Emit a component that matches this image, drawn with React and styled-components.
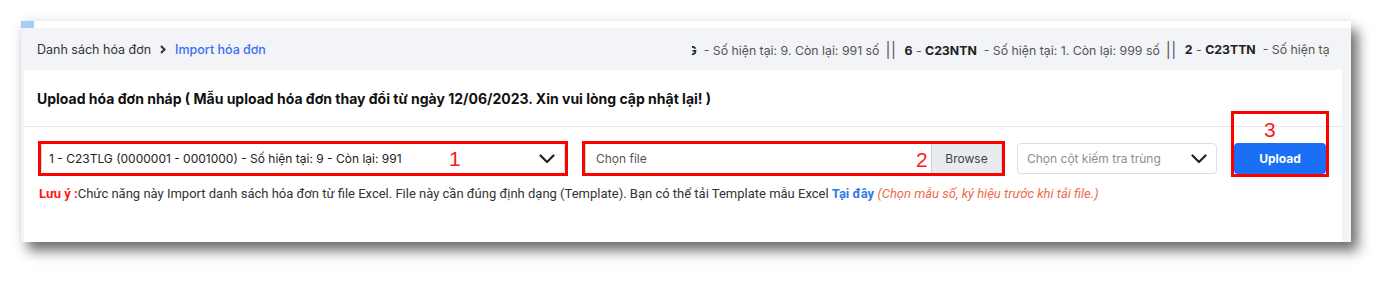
import styled, { createGlobalStyle } from 'styled-components'

const GlobalStyle = createGlobalStyle`
    body {
        margin: 0;
        background: #ffffff;
        font-family: Inter, "Noto Sans", sans-serif;
    }
`;

const Page = styled.div`
    padding: 21px 0 0 21px;
    height: 285px;
    box-sizing: border-box;
`;

const Frame = styled.div`
    width: 1330px;
    height: 221px;
    background: #f2f4f7;
    display: flex;
    flex-direction: column;
    box-shadow: 7px 9px 12px rgba(0, 0, 0, 0.55), 0 0 10px rgba(0, 0, 0, 0.08);
`;

const TopStrip = styled.div`
    height: 7px;
    background: #ffffff;
    display: flex;
`;

const TabMark = styled.div`
    width: 13px;
    background: #a6cdf6;
`;

const Header = styled.div`
    height: 42px;
    display: flex;
    align-items: center;
    padding: 0 0 0 16px;
`;

const Crumbs = styled.div`
    display: flex;
    align-items: center;
    font-size: 12.5px;
    color: #333;
    width: 655px;
`;

const CrumbLink = styled.span`
    color: ${p => (p.$active ? '#3b6ff5' : '#333')};
    font-weight: ${p => (p.$active ? 500 : 400)};
`;

const Chevron = styled.svg`
    margin: 0 9px 0 9px;
`;

const Marquee = styled.div`
    width: 637px;
    overflow: hidden;
    white-space: nowrap;
    font-size: 12.3px;
    color: #555;
`;

const MarqueeTrack = styled.div`
    display: inline-flex;
    align-items: center;
    transform: translateX(-${p => p.$offset}px);
`;

const Code = styled.b`
    color: #222;
    font-weight: 700;
`;

const Sep = styled.span`
    font-size: 15px;
    font-weight: 400;
    color: #555;
    margin: 0 8px 0 6px;
    letter-spacing: 0.5px;
`;

const Content = styled.div`
    flex: 1;
    padding: 0 9px 0 3px;
    display: flex;
`;

const Card = styled.div`
    flex: 1;
    background: #ffffff;
    display: flex;
    flex-direction: column;
`;

const CardTitle = styled.div`
    height: 56px;
    display: flex;
    align-items: center;
    padding: 0 13px;
    font-size: 14px;
    font-weight: 700;
    color: #111;
    border-bottom: 1px solid #e6e8ec;
`;

const CardBody = styled.div`
    padding: 16px 13px 0 17px;
`;

const Row = styled.div`
    display: flex;
    align-items: center;
    height: 31px;
`;

const Mark = styled.div`
    position: relative;
    margin-left: ${p => p.$before || 0}px;
    margin-right: ${p => p.$gap || 0}px;
    &::after {
        content: '';
        position: absolute;
        top: ${p => p.$top || -2}px;
        bottom: ${p => p.$bottom || -2}px;
        left: -3px;
        right: -3px;
        border: 3px solid #ff0000;
        pointer-events: none;
    }
`;

const MarkNum = styled.span`
    position: absolute;
    left: ${p => p.$left}px;
    top: ${p => p.$top}px;
    font-family: "Liberation Sans", sans-serif;
    font-size: 21px;
    color: #ff1a1a;
`;

const SelectBox = styled.div`
    width: ${p => p.$width}px;
    height: 31px;
    box-sizing: border-box;
    border: 1px solid ${p => (p.$plain ? '#dcdfe4' : '#cfd4da')};
    border-radius: 4px;
    display: flex;
    align-items: center;
    justify-content: space-between;
    padding: 0 9px 0 ${p => p.$padLeft || 9}px;
    font-size: 12px;
    color: ${p => (p.$placeholder ? '#8a8f96' : '#222')};
    background: #ffffff;
`;

const FileInput = styled.div`
    width: 417px;
    height: 31px;
    box-sizing: border-box;
    border: 1px solid #cfd4da;
    display: flex;
    font-size: 12px;
    color: #555;
`;

const FileName = styled.div`
    flex: 1;
    display: flex;
    align-items: center;
    padding-left: 10px;
`;

const Browse = styled.div`
    width: 69px;
    display: flex;
    align-items: center;
    justify-content: center;
    background: #e9ecef;
    border-left: 1px solid #cfd4da;
    color: #444;
`;

const UploadButton = styled.button`
    width: 92px;
    height: 31px;
    border: none;
    border-radius: 4px;
    background: #1a6ff4;
    color: #ffffff;
    font-family: Inter, sans-serif;
    font-weight: 700;
    font-size: 12px;
`;

const Note = styled.div`
    margin-top: 12px;
    margin-left: -2px;
    font-family: Roboto, sans-serif;
    font-size: 13px;
    color: #333;
    white-space: nowrap;
`;

const NoteLabel = styled.b`
    color: #ff1a1a;
`;

const NoteLink = styled.b`
    color: #2f7be8;
`;

const NoteHint = styled.i`
    color: #ee6a4a;
`;

const Caret = () => (
    <svg width="16" height="10" viewBox="0 0 16 10">
        <path d="M1.5 1.5 L8 8 L14.5 1.5" fill="none" stroke="#222" strokeWidth="2.2" strokeLinecap="round" strokeLinejoin="round" />
    </svg>
);

const series = [
    { no: '1', code: 'C23TLG', cur: 9, left: 991 },
    { no: '6', code: 'C23NTN', cur: 1, left: 999 },
    { no: '2', code: 'C23TTN', cur: 1, left: 999 },
];

const App = () => {
    return (
        <Page>
            <GlobalStyle />
            <Frame>
                <TopStrip>
                    <TabMark />
                </TopStrip>
                <Header>
                    <Crumbs>
                        <CrumbLink>Danh sách hóa đơn</CrumbLink>
                        <Chevron width="6" height="9" viewBox="0 0 6 9">
                            <path d="M1 1 L4.5 4.5 L1 8" fill="none" stroke="#333" strokeWidth="2" />
                        </Chevron>
                        <CrumbLink $active>Import hóa đơn</CrumbLink>
                    </Crumbs>
                    <Marquee>
                        <MarqueeTrack $offset={62}>
                            {series.map((s, i) => (
                                <span key={s.code}>
                                    <Code>{s.no}</Code> - <Code>{s.code}</Code>&nbsp; - Số hiện tại: {s.cur}. Còn lại: {s.left} số
                                    {i < series.length - 1 && <Sep>||</Sep>}
                                </span>
                            ))}
                        </MarqueeTrack>
                    </Marquee>
                </Header>
                <Content>
                    <Card>
                        <CardTitle>
                            Upload hóa đơn nháp ( Mẫu upload hóa đơn thay đổi từ ngày 12/06/2023. Xin vui lòng cập nhật lại! )
                        </CardTitle>
                        <CardBody>
                            <Row>
                                <Mark $gap={20}>
                                    <SelectBox $width={524} $padLeft={7}>
                                        1 - C23TLG (0000001 - 0001000) - Số hiện tại: 9 - Còn lại: 991
                                        <Caret />
                                    </SelectBox>
                                    <MarkNum $left={408} $top={4}>1</MarkNum>
                                </Mark>
                                <Mark $gap={15}>
                                    <FileInput>
                                        <FileName>Chọn file</FileName>
                                        <Browse>Browse</Browse>
                                    </FileInput>
                                    <MarkNum $left={331} $top={5}>2</MarkNum>
                                </Mark>
                                <SelectBox $width={200} $plain $placeholder>
                                    Chọn cột kiếm tra trùng
                                    <Caret />
                                </SelectBox>
                                <Mark $before={17} $top={-32} $bottom={-3}>
                                    <UploadButton>Upload</UploadButton>
                                    <MarkNum $left={30} $top={-25}>3</MarkNum>
                                </Mark>
                            </Row>
                            <Note>
                                <NoteLabel>Lưu ý :</NoteLabel>Chức năng này Import danh sách hóa đơn từ file Excel. File này cần đúng định dạng (Template). Bạn có thể tải Template mẫu Excel <NoteLink>Tại đây</NoteLink> <NoteHint>(Chọn mẫu số, ký hiệu trước khi tải file.)</NoteHint>
                            </Note>
                        </CardBody>
                    </Card>
                </Content>
            </Frame>
        </Page>
    )
}

export default App
